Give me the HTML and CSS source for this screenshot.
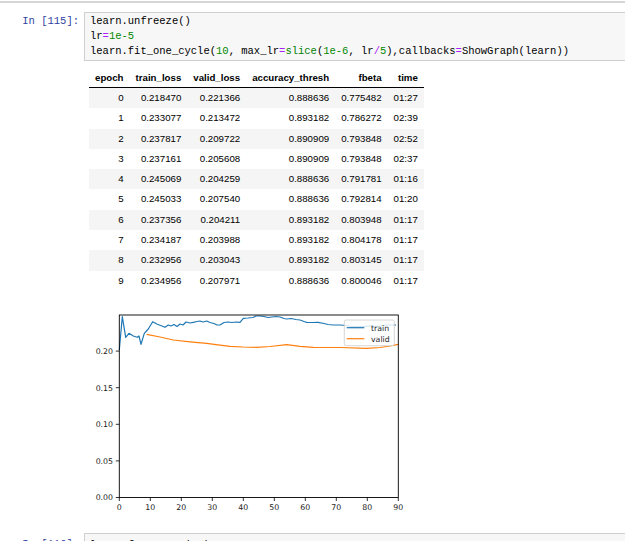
FILE: index.html
```html
<!DOCTYPE html>
<html>
<head>
<meta charset="utf-8">
<link rel="stylesheet" href="styles.css">
</head>
<body>
<div class="prev"><span class="prev-text">lr_find(learn) ; (......)</span></div>
<div class="cell">
  <div class="prompt">In [115]:</div>
  <div class="input">
    <div class="line">learn.unfreeze()</div>
    <div class="line">lr<span class="op">=</span><span class="num">1e-5</span></div>
    <div class="line">learn.fit_one_cycle(<span class="num">10</span>, max_lr<span class="op">=</span><span class="bi">slice</span>(<span class="num">1e-6</span>, lr<span class="op">/</span><span class="num">5</span>),callbacks<span class="op">=</span>ShowGraph(learn))</div>
  </div>
</div>
<div class="output">
  <table class="results">
    <thead>
      <tr><th>epoch</th><th>train_loss</th><th>valid_loss</th><th>accuracy_thresh</th><th>fbeta</th><th>time</th></tr>
    </thead>
    <tbody>
      <tr><td>0</td><td>0.218470</td><td>0.221366</td><td>0.888636</td><td>0.775482</td><td>01:27</td></tr>
      <tr><td>1</td><td>0.233077</td><td>0.213472</td><td>0.893182</td><td>0.786272</td><td>02:39</td></tr>
      <tr><td>2</td><td>0.237817</td><td>0.209722</td><td>0.890909</td><td>0.793848</td><td>02:52</td></tr>
      <tr><td>3</td><td>0.237161</td><td>0.205608</td><td>0.890909</td><td>0.793848</td><td>02:37</td></tr>
      <tr><td>4</td><td>0.245069</td><td>0.204259</td><td>0.888636</td><td>0.791781</td><td>01:16</td></tr>
      <tr><td>5</td><td>0.245033</td><td>0.207540</td><td>0.888636</td><td>0.792814</td><td>01:20</td></tr>
      <tr><td>6</td><td>0.237356</td><td>0.204211</td><td>0.893182</td><td>0.803948</td><td>01:17</td></tr>
      <tr><td>7</td><td>0.234187</td><td>0.203988</td><td>0.893182</td><td>0.804178</td><td>01:17</td></tr>
      <tr><td>8</td><td>0.232956</td><td>0.203043</td><td>0.893182</td><td>0.803145</td><td>01:17</td></tr>
      <tr><td>9</td><td>0.234956</td><td>0.207971</td><td>0.888636</td><td>0.800046</td><td>01:17</td></tr>
    </tbody>
  </table>
  <svg class="plot" width="325" height="215" viewBox="0 0 325 215">
    <polyline class="train" points="31.3,50 34.3,16.7 37.7,37.3 41,33.3 45.3,36 49.3,37.3 51,36 53,44.3 56.3,33.3 60.3,29 64.7,21.7 69.3,24.3 74,26 77,27.3 80.3,25 83,26 86,24.5 89,26.5 92,24 95,25 98,22 102,23 105.3,22.3 109,21.5 112,21 115,22 118.7,21 122,22.5 126,23.5 129,25 132,25 136,22.5 140,22 144,22.5 148,22 152,22.3 155.3,18.3 160,18 165,17.5 168,16 172,16 176,16.5 180,17.5 184,17 188,16.5 192,17 196,18.5 198.7,19 203,18.5 208,19.5 212,20 216,21.5 218.7,22.3 224,22.5 230,22.3 236,23.5 240,24.5 245.3,25 252,25 258,25.5 264,26.5 270,26.5 275.3,26.7 282,26 290,26.5 298,25 304,25 308,25"/>
    <polyline class="valid" points="58.7,34.3 72,37 85.3,40 102,41.8 118.7,43.3 130,44.8 142,46.3 155,47 168.7,47.3 182,46.5 198.7,44.7 212,46.3 225.3,47.3 252,47.5 278.7,48.3 292,47.5 302,46 310.3,44.3"/>
    <rect class="frame" x="31.3" y="15" width="279" height="182.5"/>
    <g class="ticks">
      <line x1="27.8" y1="197.5" x2="31.3" y2="197.5"/>
      <line x1="27.8" y1="160.9" x2="31.3" y2="160.9"/>
      <line x1="27.8" y1="124.3" x2="31.3" y2="124.3"/>
      <line x1="27.8" y1="87.7" x2="31.3" y2="87.7"/>
      <line x1="27.8" y1="51.1" x2="31.3" y2="51.1"/>
      <line x1="31.3" y1="197.5" x2="31.3" y2="201"/>
      <line x1="62.3" y1="197.5" x2="62.3" y2="201"/>
      <line x1="93.3" y1="197.5" x2="93.3" y2="201"/>
      <line x1="124.3" y1="197.5" x2="124.3" y2="201"/>
      <line x1="155.3" y1="197.5" x2="155.3" y2="201"/>
      <line x1="186.3" y1="197.5" x2="186.3" y2="201"/>
      <line x1="217.3" y1="197.5" x2="217.3" y2="201"/>
      <line x1="248.3" y1="197.5" x2="248.3" y2="201"/>
      <line x1="279.3" y1="197.5" x2="279.3" y2="201"/>
      <line x1="310.3" y1="197.5" x2="310.3" y2="201"/>
    </g>
    <g class="ylabels">
      <text x="25" y="200.3">0.00</text>
      <text x="25" y="163.7">0.05</text>
      <text x="25" y="127.1">0.10</text>
      <text x="25" y="90.5">0.15</text>
      <text x="25" y="53.9">0.20</text>
    </g>
    <g class="xlabels">
      <text x="31.3" y="209.8">0</text>
      <text x="62.3" y="209.8">10</text>
      <text x="93.3" y="209.8">20</text>
      <text x="124.3" y="209.8">30</text>
      <text x="155.3" y="209.8">40</text>
      <text x="186.3" y="209.8">50</text>
      <text x="217.3" y="209.8">60</text>
      <text x="248.3" y="209.8">70</text>
      <text x="279.3" y="209.8">80</text>
      <text x="310.3" y="209.8">90</text>
    </g>
    <rect class="legend" x="256.3" y="20" width="50" height="25.7" rx="2"/>
    <line class="train" x1="258.7" y1="27.7" x2="276.3" y2="27.7"/>
    <line class="valid" x1="258.7" y1="38.7" x2="276.3" y2="38.7"/>
    <text class="legtext" x="283" y="30.5">train</text>
    <text class="legtext" x="283" y="41.5">valid</text>
  </svg>
</div>
<div class="cell next">
  <div class="prompt">In [116]:</div>
  <div class="input">
    <div class="line">learn.freeze_to(<span class="op">-</span><span class="num">1</span>)</div>
  </div>
</div>
</body>
</html>
```

FILE: styles.css
```css
html, body {
  margin: 0;
  padding: 0;
  background: #ffffff;
  overflow: hidden;
  width: 625px;
  height: 541px;
}

.prev {
  height: 1px;
  border-bottom: 2px solid #d6d6d6;
  overflow: hidden;
  padding-left: 103px;
  font-family: "Liberation Mono", "DejaVu Sans Mono", monospace;
  font-size: 10.5px;
  line-height: 15px;
  color: #777;
}

.prev-text {
  display: block;
  margin-top: -12px;
}

.cell {
  display: flex;
  margin-top: 9px;
  font-family: "Liberation Mono", "DejaVu Sans Mono", monospace;
  font-size: 10.5px;
  line-height: 15px;
}

.prompt {
  width: 79px;
  flex: none;
  text-align: right;
  padding-right: 5px;
  padding-top: 2px;
  color: #303f9f;
  white-space: nowrap;
}

.input {
  flex: 1;
  background: #f7f7f7;
  border: 1px solid #cfcfcf;
  border-right: none;
  padding: 1px 0 1px 5px;
  color: #000;
}

.line {
  white-space: pre;
  height: 15px;
}

.op { color: #aa22ff; }
.num { color: #008800; }
.bi { color: #008000; }

.output {
  padding-left: 88px;
  margin-top: 7px;
}

.results {
  margin-left: 1px;
  border-collapse: collapse;
  border-spacing: 0;
  font-family: "Liberation Sans", Arial, sans-serif;
  font-size: 9.7px;
  color: #000;
}

.results th {
  font-weight: bold;
  text-align: right;
  padding: 4px 6px 3px 6px;
  line-height: 12px;
  border-bottom: 1px solid #000;
  white-space: nowrap;
}

.results td {
  text-align: right;
  padding: 0 6px;
  line-height: 20.3px;
  white-space: nowrap;
}

.results tbody tr:nth-child(odd) {
  background: #f5f5f5;
}

.plot {
  display: block;
  margin-top: 9px;
  font-family: "DejaVu Sans", sans-serif;
}

.plot polyline,
.plot line.train,
.plot line.valid {
  fill: none;
  stroke-width: 1.2;
  stroke-linejoin: round;
}

.plot .train { stroke: #1f77b4; }
.plot .valid { stroke: #ff7f0e; }

.plot .frame {
  fill: none;
  stroke: #000;
  stroke-width: 0.9;
}

.plot .ticks line {
  stroke: #000;
  stroke-width: 0.8;
}

.plot .ylabels text {
  font-size: 7.8px;
  text-anchor: end;
  fill: #222;
}

.plot .xlabels text {
  font-size: 7.8px;
  text-anchor: middle;
  fill: #222;
}

.plot .legend {
  fill: #ffffff;
  fill-opacity: 0.8;
  stroke: #cccccc;
  stroke-width: 0.8;
}

.plot .legtext {
  font-size: 7.8px;
  fill: #222;
}

.cell.next {
  margin-top: 18px;
}

.cell.next .prompt,
.cell.next .input {
  padding-top: 4px;
}
```
